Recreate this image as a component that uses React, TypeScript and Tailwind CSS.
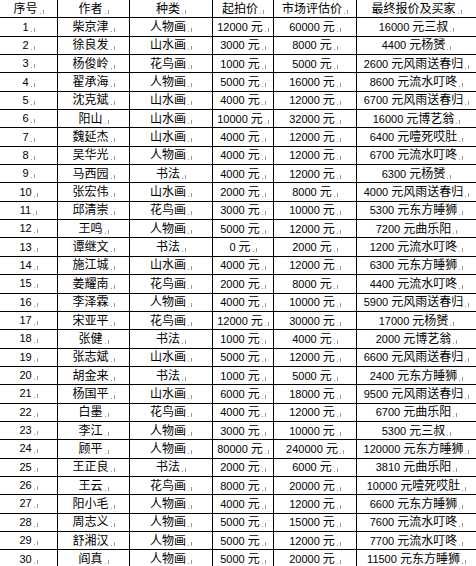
import React from "react";

const rows: string[][] = [
  ["1", "柴京津", "人物画", "12000 元", "60000 元", "16000 元三叔"],
  ["2", "徐良发", "山水画", "3000 元", "8000 元", "4400 元杨赟"],
  ["3", "杨俊岭", "花鸟画", "1000 元", "5000 元", "2600 元风雨送春归"],
  ["4", "翟承海", "人物画", "5000 元", "16000 元", "8600 元流水叮咚"],
  ["5", "沈克斌", "山水画", "4000 元", "12000 元", "6700 元风雨送春归"],
  ["6", "阳山", "山水画", "10000 元", "32000 元", "16000 元博艺翁"],
  ["7", "魏延杰", "山水画", "4000 元", "12000 元", "6400 元噎死哎肚"],
  ["8", "吴华光", "人物画", "4000 元", "12000 元", "6700 元流水叮咚"],
  ["9", "马西园", "书法", "4000 元", "12000 元", "6300 元杨赟"],
  ["10", "张宏伟", "山水画", "2000 元", "8000 元", "4000 元风雨送春归"],
  ["11", "邱清崇", "花鸟画", "3000 元", "10000 元", "5300 元东方睡狮"],
  ["12", "王鸣", "人物画", "5000 元", "12000 元", "7200 元曲乐阳"],
  ["13", "谭继文", "书法", "0 元", "2000 元", "1200 元流水叮咚"],
  ["14", "施江城", "山水画", "4000 元", "12000 元", "6300 元东方睡狮"],
  ["15", "姜耀南", "花鸟画", "2000 元", "8000 元", "4400 元流水叮咚"],
  ["16", "李泽霖", "人物画", "4000 元", "10000 元", "5900 元风雨送春归"],
  ["17", "宋亚平", "花鸟画", "12000 元", "30000 元", "17000 元杨赟"],
  ["18", "张健", "书法", "1000 元", "4000 元", "2000 元博艺翁"],
  ["19", "张志斌", "山水画", "5000 元", "12000 元", "6600 元风雨送春归"],
  ["20", "胡金来", "书法", "1000 元", "5000 元", "2400 元东方睡狮"],
  ["21", "杨国平", "山水画", "6000 元", "18000 元", "9500 元风雨送春归"],
  ["22", "白墨", "花鸟画", "4000 元", "12000 元", "6700 元曲乐阳"],
  ["23", "李江", "人物画", "3000 元", "10000 元", "5300 元三叔"],
  ["24", "顾平", "人物画", "80000 元", "240000 元", "120000 元东方睡狮"],
  ["25", "王正良", "书法", "2000 元", "6000 元", "3810 元曲乐阳"],
  ["26", "王云", "花鸟画", "8000 元", "20000 元", "10000 元噎死哎肚"],
  ["27", "阳小毛", "人物画", "4000 元", "12000 元", "6600 元东方睡狮"],
  ["28", "周志义", "人物画", "5000 元", "15000 元", "7600 元流水叮咚"],
  ["29", "舒湘汉", "人物画", "5000 元", "12000 元", "7700 元流水叮咚"],
  ["30", "阎真", "人物画", "5000 元", "20000 元", "11500 元东方睡狮"],
];

const header = ["序号", "作者", "种类", "起拍价", "市场评估价", "最终报价及买家"];

const colW = ["w-[57px]", "w-[72px]", "w-[83px]", "w-[61px]", "w-[83px]", "flex-1"];

// word's little paragraph mark after each cell
const Mark = () => (
  <svg width="4" height="5" viewBox="0 0 4 5" className="ml-[2px] shrink-0 mb-[1px]">
    <rect x="0" y="4" width="1" height="1" fill="#9a9a9a" />
    <rect x="3" y="1" width="1" height="4" fill="#9a9a9a" />
  </svg>
);

// digits in a narrower size than the han characters
const Text = ({ s }: { s: string }) => {
  const parts = s.match(/[\x00-\x7f]+|[^\x00-\x7f]+/g) || [];
  return (
    <>
      {parts.map((p, i) =>
        /^[\x00-\x7f]+$/.test(p) ? (
          <span key={i} className="text-[11px] whitespace-pre">{p}</span>
        ) : (
          <span key={i} className="text-[12px]">{p}</span>
        )
      )}
    </>
  );
};

const Row = ({ cells, last }: { cells: string[]; last?: boolean }) => (
  <div className={"flex h-[18.35px] " + (last ? "" : "border-b border-black")}>
    {cells.map((c, i) => (
      <div
        key={i}
        className={
          colW[i] +
          " shrink-0 flex items-center justify-center whitespace-nowrap " +
          (i > 0 ? "border-l border-black" : "")
        }
      >
        <span className="flex items-end leading-none">
          <Text s={c} />
          <Mark />
        </span>
      </div>
    ))}
  </div>
);

export default function App() {
  return (
    <div
      className="w-[476px] h-[566px] overflow-hidden bg-white text-black"
      style={{ fontFamily: '"Liberation Sans", "Noto Sans CJK SC", sans-serif' }}
    >
      <Row cells={header} />
      {rows.map((r, i) => (
        <Row key={r[0]} cells={r} last={i === rows.length - 1} />
      ))}
    </div>
  );
}
